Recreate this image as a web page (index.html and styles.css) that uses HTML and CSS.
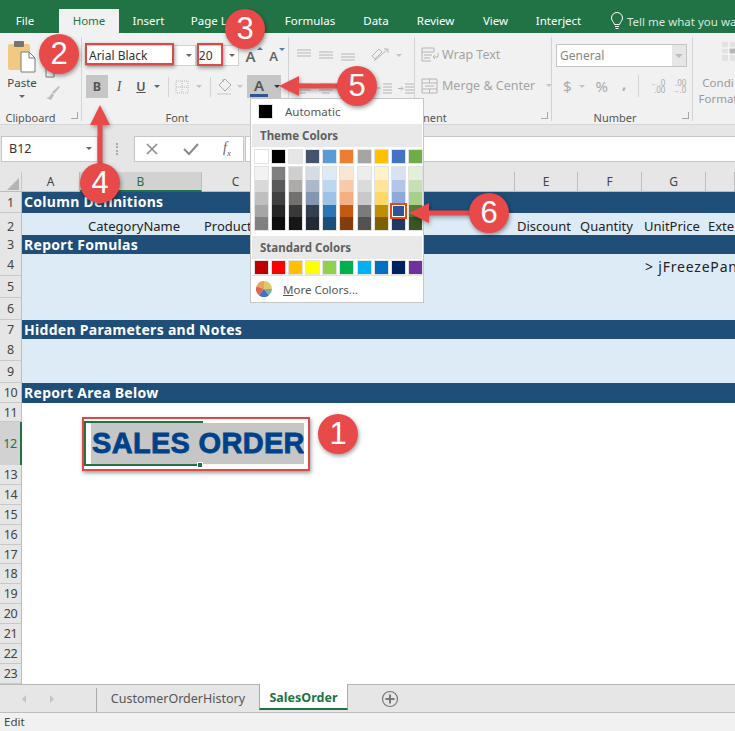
FILE: index.html
```html
<!DOCTYPE html>
<html lang="en">
<head>
    <meta charset="UTF-8">
    <title>Excel - Sales Order</title>
    <link rel="stylesheet" href="styles.css">
</head>
<body>
    <div class="tabs">
        <span class="tab tab-file">File</span>
        <span class="tab tab-home">Home</span>
        <span class="tab tab-insert">Insert</span>
        <span class="tab tab-page">Page Layout</span>
        <span class="tab tab-formulas">Formulas</span>
        <span class="tab tab-data">Data</span>
        <span class="tab tab-review">Review</span>
        <span class="tab tab-view">View</span>
        <span class="tab tab-interject">Interject</span>
        <span class="tell">
            <svg width="14" height="18" viewBox="0 0 14 18"><path d="M4.5 12.5C4 10 1.5 9 1.500 6a5.500 5.500 0 0 1 11 0c0 3-2.500 4-3 6.500zM5 14.500h4M5.500 16.500h3" fill="none" stroke="#fff" stroke-width="1"/></svg>
            Tell me what you want to do
        </span>
    </div>

    <div class="ribbon">
        <div class="group group-clipboard">
            <div class="clip-body">
                <div class="paste">
                    <svg width="30" height="33" viewBox="0 0 30 33"><rect x="1" y="4" width="22" height="26" rx="2" fill="#f2c983"/><rect x="7" y="1" width="10" height="6" rx="1" fill="#77736d"/><path d="M14 12h8l6 6v14H14z" fill="#fff" stroke="#7a7a7a"/><path d="M22 12v6h6" fill="none" stroke="#7a7a7a"/></svg>
                    <span>Paste</span>
                    <i class="caret"></i>
                </div>
                <div class="clip-tools">
                    <svg width="16" height="16" viewBox="0 0 16 16"><path d="M1 5h8v10H1zM5 1h8v10" fill="none" stroke="#777"/></svg>
                    <svg width="16" height="16" viewBox="0 0 16 16"><path d="M14 1l1 1-6 7-2-2zM7 8l2 2-3 5-5-2 3-1z" fill="#bdbdbd"/></svg>
                </div>
            </div>
            <div class="group-label">Clipboard<i class="launcher"></i></div>
        </div>

        <div class="group group-font">
            <div class="tool-row">
                <div class="combo combo-name">Arial Black<i class="caret"></i></div>
                <div class="combo combo-size">20<i class="caret"></i></div>
                <span class="grow-a">A<i class="tick tick-up"></i></span>
                <span class="shrink-a">A<i class="tick tick-down"></i></span>
            </div>
            <div class="tool-row tool-row-2">
                <span class="btn btn-on btn-b">B</span>
                <span class="btn btn-i">I</span>
                <span class="btn btn-u">U</span>
                <i class="caret"></i>
                <i class="vsep"></i>
                <svg class="border-icon" width="16" height="16" viewBox="0 0 16 16"><rect x="2" y="2" width="12" height="12" fill="none" stroke="#bbb" stroke-dasharray="1 1"/><path d="M8 2v12M2 8h12" stroke="#bbb" stroke-dasharray="1 1"/></svg>
                <i class="caret caret-light"></i>
                <i class="vsep"></i>
                <svg class="fill-icon" width="18" height="18" viewBox="0 0 18 18"><path d="M9 1l6 6-6 6-6-6zM7 4V1" fill="none" stroke="#a9a9a9"/><rect x="1" y="15" width="14" height="2" fill="#ddd"/></svg>
                <i class="caret caret-light"></i>
                <span class="color-btn"><span class="color-a">A</span><i class="caret caret-dark"></i></span>
            </div>
            <div class="group-label">Font<i class="launcher"></i></div>
        </div>

        <div class="group group-align">
            <div class="align-body">
                <div class="align-left">
                    <div class="tool-row align-row">
                        <svg width="16" height="12" viewBox="0 0 16 12"><path d="M1 1h14M1 4h14M1 7h14" stroke="#b5b5b5"/></svg>
                        <svg width="16" height="12" viewBox="0 0 16 12"><path d="M1 3h14M1 6h14M1 9h14" stroke="#b5b5b5"/></svg>
                        <svg width="16" height="12" viewBox="0 0 16 12"><path d="M1 5h14M1 8h14M1 11h14" stroke="#b5b5b5"/></svg>
                        <svg class="orient" width="20" height="18" viewBox="0 0 20 18"><path d="M2 10l7-7 3 3-7 7zM4 15l13-11M14 3h4v4" fill="none" stroke="#b5b5b5"/></svg>
                        <i class="caret caret-light"></i>
                    </div>
                    <div class="tool-row align-row align-row-2">
                        <svg width="16" height="12" viewBox="0 0 16 12"><path d="M1 1h14M1 4h9M1 7h14M1 10h9" stroke="#b5b5b5"/></svg>
                        <svg width="16" height="12" viewBox="0 0 16 12"><path d="M1 1h14M4 4h8M1 7h14M4 10h8" stroke="#b5b5b5"/></svg>
                        <svg width="16" height="12" viewBox="0 0 16 12"><path d="M1 1h14M6 4h9M1 7h14M6 10h9" stroke="#b5b5b5"/></svg>
                        <svg class="indent" width="16" height="12" viewBox="0 0 16 12"><path d="M7 1h9M7 4h9M7 7h9M7 10h9M1 5h4" stroke="#b5b5b5"/></svg>
                        <svg width="16" height="12" viewBox="0 0 16 12"><path d="M7 1h9M7 4h9M7 7h9M7 10h9M0 5.500h5M3 3.500l2 2-2 2" fill="none" stroke="#b5b5b5"/></svg>
                    </div>
                </div>
                <div class="align-right">
                    <div class="wide-tool">
                        <svg width="18" height="16" viewBox="0 0 18 16"><path d="M1 1h12v4H1zM1 5v9h9M3 8h8M3 11h6M17 6v4h-5M14 8l-2 2 2 2" fill="none" stroke="#b5b5b5"/></svg>
                        <span>Wrap Text</span>
                    </div>
                    <div class="wide-tool wide-tool-2">
                        <svg width="18" height="16" viewBox="0 0 18 16"><path d="M1 1h15v14H1zM1 5h15M1 11h15M8.500 1v4M8.500 11v4M4 8h9" fill="none" stroke="#b5b5b5"/></svg>
                        <span>Merge &amp; Center</span>
                        <i class="caret caret-light"></i>
                    </div>
                </div>
            </div>
            <div class="group-label">Alignment<i class="launcher"></i></div>
        </div>

        <div class="group group-number">
            <div class="combo combo-format">General<i class="caret caret-light"></i></div>
            <div class="tool-row number-row">
                <span class="num-sym">$</span>
                <i class="caret caret-light"></i>
                <span class="num-sym num-pct">%</span>
                <span class="num-sym num-comma">,</span>
                <i class="vsep"></i>
                <span class="dec">←.0<br>.00</span>
                <span class="dec">.00<br>→.0</span>
            </div>
            <div class="group-label">Number<i class="launcher"></i></div>
        </div>

        <div class="group group-cond">
            <svg width="18" height="26" viewBox="0 0 18 26"><path d="M0 1h18v19H0z" fill="#e2e2e2"/><path d="M7 7h11v6H7z" fill="#b5b5b5"/><path d="M0 7h18M0 13h18M7 1v19" stroke="#fff"/></svg>
            <span>Condi</span>
            <span>Format</span>
        </div>
    </div>

    <div class="formula-bar">
        <div class="name-box">B12<i class="caret"></i></div>
        <div class="dots"></div>
        <div class="fx-box">
            <svg width="14" height="14" viewBox="0 0 14 14"><path d="M2 2l10 10M12 2L2 12" stroke="#8a8a8a" stroke-width="1.600"/></svg>
            <svg width="16" height="14" viewBox="0 0 16 14"><path d="M1 7l5 5L15 2" fill="none" stroke="#8a8a8a" stroke-width="2"/></svg>
            <span class="fx">f<sub>x</sub></span>
        </div>
        <div class="formula-input"></div>
    </div>

    <div class="sheet">
        <div class="row col-heads">
            <div class="corner"></div>
            <div class="col-head">A</div>
            <div class="col-head col-active">B</div>
            <div class="col-head">C</div>
            <div class="col-head">D</div>
            <div class="col-head">E</div>
            <div class="col-head">F</div>
            <div class="col-head">G</div>
            <div class="col-head"></div>
        </div>

        <div class="row band-dark row-h21"><div class="num">1</div><div class="title">Column Definitions</div></div>
        <div class="row band-light row-h22">
            <div class="num">2</div>
            <div class="cell"></div>
            <div class="cell cell-b">CategoryName</div>
            <div class="cell">ProductName</div>
            <div class="cell"></div>
            <div class="cell">Discount</div>
            <div class="cell">Quantity</div>
            <div class="cell">UnitPrice</div>
            <div class="cell">ExtendedPrice</div>
        </div>
        <div class="row band-dark row-h19"><div class="num">3</div><div class="title">Report Fomulas</div></div>
        <div class="row band-light row-h22">
            <div class="num">4</div>
            <div class="cell"></div><div class="cell"></div><div class="cell"></div><div class="cell"></div><div class="cell"></div><div class="cell"></div>
            <div class="cell cell-freeze">&gt; jFreezePanes</div>
        </div>
        <div class="row band-light row-h22"><div class="num">5</div></div>
        <div class="row band-light row-h22"><div class="num">6</div></div>
        <div class="row band-dark row-h19"><div class="num">7</div><div class="title">Hidden Parameters and Notes</div></div>
        <div class="row band-light row-h22"><div class="num">8</div></div>
        <div class="row band-light row-h22"><div class="num">9</div></div>
        <div class="row band-dark row-h20"><div class="num">10</div><div class="title">Report Area Below</div></div>
        <div class="row row-h19"><div class="num">11</div></div>
        <div class="row row-h43">
            <div class="num num-active">12</div>
            <div class="cell"></div>
            <div class="cell-selected">
                <span class="sales">SALES ORDER</span>
                <i class="fill-handle"></i>
            </div>
        </div>
        <div class="row row-plain"><div class="num">13</div></div>
        <div class="row row-plain"><div class="num">14</div></div>
        <div class="row row-plain"><div class="num">15</div></div>
        <div class="row row-plain"><div class="num">16</div></div>
        <div class="row row-plain"><div class="num">17</div></div>
        <div class="row row-plain"><div class="num">18</div></div>
        <div class="row row-plain"><div class="num">19</div></div>
        <div class="row row-plain"><div class="num">20</div></div>
        <div class="row row-plain"><div class="num">21</div></div>
        <div class="row row-plain"><div class="num">22</div></div>
        <div class="row row-plain"><div class="num">23</div></div>
    </div>

    <div class="sheet-tabs">
        <div class="nav-arrows"><i class="arrow-left"></i><i class="arrow-right"></i></div>
        <div class="sheet-tab">CustomerOrderHistory</div>
        <div class="sheet-tab sheet-tab-on">SalesOrder</div>
        <svg class="add-sheet" width="18" height="18" viewBox="0 0 18 18"><circle cx="9" cy="9" r="7.500" fill="none" stroke="#777" stroke-width="1.200"/><path d="M9 4.500v9M4.500 9h9" stroke="#777" stroke-width="2"/></svg>
    </div>
    <div class="status-bar">Edit</div>

    <!-- font colour dropdown -->
    <div class="color-menu">
        <div class="menu-auto"><i class="auto-swatch"></i>Automatic</div>
        <div class="menu-head">Theme Colors</div>
        <div class="swatch-row" id="themeRow"></div>
        <div class="shade-grid" id="shadeGrid"></div>
        <div class="menu-head">Standard Colors</div>
        <div class="swatch-row swatch-row-std" id="standardRow"></div>
        <div class="menu-more">
            <svg width="16" height="16" viewBox="0 0 16 16"><path d="M8 8V0a8 8 0 0 0-7.500 5.200z" fill="#e8a25a"/><path d="M8 8L.5 5.200A8 8 0 0 0 3 14.200z" fill="#d9694f"/><path d="M8 8l-5 6.200a8 8 0 0 0 10 0z" fill="#4472c4"/><path d="M8 8l5 6.200A8 8 0 0 0 16 8z" fill="#7fae9a"/><path d="M8 8h8a8 8 0 0 0-8-8z" fill="#e4c66a"/></svg>
            <span><u>M</u>ore Colors...</span>
        </div>
    </div>

    <!-- callouts drawn over the screenshot -->
    <div class="mark mark-name"></div>
    <div class="mark mark-size"></div>
    <div class="mark mark-sales"></div>
    <svg class="arrows" width="735" height="731" viewBox="0 0 735 731">
        <path d="M97.500 170V125H90L100 105L110 125H102.500V170z"/>
        <path d="M345 83.500H299V76L279 86L299 96V88.500H345z"/>
        <path d="M475 210.500H429V203L409 213L429 223V215.500H475z"/>
    </svg>
    <div class="badge badge-1">1</div>
    <div class="badge badge-2">2</div>
    <div class="badge badge-3">3</div>
    <div class="badge badge-4">4</div>
    <div class="badge badge-5">5</div>
    <div class="badge badge-6">6</div>

    <script src="palette.js"></script>
</body>
</html>
```

FILE: styles.css
```css
* {
    margin: 0;
    padding: 0;
    box-sizing: border-box;
}

html {
    overflow: hidden;
}

body {
    width: 735px;
    height: 731px;
    overflow: hidden;
    position: relative;
    background: #fff;
    font-family: "Noto Sans", "Liberation Sans", sans-serif;
    font-size: 12px;
    color: #444;
}

i {
    display: inline-block;
}

.caret {
    width: 0;
    height: 0;
    border-left: 3.5px solid transparent;
    border-right: 3.5px solid transparent;
    border-top: 3.5px solid #666;
}

.caret-light {
    border-top-color: #c4c4c4;
}

.caret-dark {
    border-top-color: #333;
}

/* title tabs */
.tabs {
    height: 33px;
    background: #217346;
    color: #fff;
    display: flex;
    align-items: flex-end;
    font-size: 11.500px;
    white-space: nowrap;
    overflow: hidden;
}

.tab {
    height: 24px;
    line-height: 24px;
    text-align: center;
    flex-shrink: 0;
}

.tab-file { width: 59px; padding-right: 9px; }
.tab-home { width: 60px; background: #f1f1f1; color: #217346; }
.tab-insert { width: 59px; }
.tab-page { width: 92px; }
.tab-formulas { width: 80px; }
.tab-data { width: 52px; }
.tab-review { width: 67px; }
.tab-view { width: 53px; }
.tab-interject { width: 73px; }

.tell {
    height: 24px;
    margin-left: 15px;
    display: flex;
    align-items: center;
    gap: 3px;
    color: #d5e8dc;
    flex-shrink: 0;
}

/* ribbon */
.ribbon {
    height: 92px;
    background: #f1f1f1;
    border-bottom: 1px solid #d6d6d6;
    display: flex;
    padding-top: 4px;
    overflow: hidden;
}

.group {
    height: 84px;
    border-right: 1px solid #d4d4d4;
    position: relative;
    flex-shrink: 0;
}

.group-label {
    position: absolute;
    left: 0;
    right: 0;
    bottom: -4px;
    text-align: center;
    font-size: 11px;
    line-height: 15px;
    color: #555;
}

.group-clipboard .group-label { padding-right: 20px; }
.group-font .group-label { padding-right: 16px; }
.group-number .group-label { padding-right: 14px; }

.launcher {
    position: absolute;
    right: 3px;
    bottom: 6px;
    width: 7px;
    height: 7px;
    border-left: 1px solid #a8a8a8;
    border-bottom: 1px solid #a8a8a8;
    transform: scaleX(-1);
}

.group-clipboard { width: 82px; }
.group-font { width: 207px; padding: 8px 0 0 3px; }
.group-align { width: 263px; }
.group-number { width: 141px; padding: 7px 0 0 4px; }
.group-cond {
    width: 42px;
    border: none;
    display: flex;
    flex-direction: column;
    align-items: center;
    color: #999;
    font-size: 11.500px;
    line-height: 16px;
    padding: 4px 0 0 8px;
    white-space: nowrap;
}

.group-cond svg {
    margin-bottom: 8px;
    margin-left: 26px;
}

.clip-body {
    display: flex;
    padding: 3px 0 0 8px;
}

.paste {
    width: 28px;
    display: flex;
    flex-direction: column;
    align-items: center;
    font-size: 11.500px;
    line-height: 14px;
}

.paste span {
    margin-top: 3px;
}

.paste .caret {
    margin-top: 5px;
}

.clip-tools {
    margin: 22px 0 0 9px;
    display: flex;
    flex-direction: column;
    gap: 7px;
}

.tool-row {
    display: flex;
    align-items: center;
}

.tool-row-2 {
    margin-top: 9px;
    height: 23px;
    padding-left: 1px;
}

.combo {
    background: #fff;
    height: 21px;
    line-height: 20px;
    border: 1px solid #d0d0d0;
    position: relative;
    font-size: 12px;
    padding-left: 3px;
    color: #333;
    white-space: nowrap;
}

.combo .caret {
    position: absolute;
    right: 3px;
    top: 8px;
}

.combo-name { width: 112px; }
.combo-size { width: 44px; margin-right: 5px; padding-left: 2px; }

.grow-a, .shrink-a {
    position: relative;
    font-weight: 600;
    color: #666;
    width: 22px;
    padding-left: 1px;
}

.grow-a { font-size: 15px; }
.shrink-a { font-size: 13px; padding-left: 3px; }

.tick {
    position: absolute;
    top: 1px;
    right: 3px;
    width: 0;
    height: 0;
    border-left: 3px solid transparent;
    border-right: 3px solid transparent;
}

.tick-up { border-bottom: 3px solid #4a7ebb; }
.tick-down { border-top: 3px solid #4a7ebb; }

.btn {
    width: 22px;
    height: 23px;
    line-height: 23px;
    text-align: center;
    font-size: 12.500px;
    color: #555;
    margin-right: 0;
}

.btn-on { background: #c6c6c6; }
.btn-b { font-weight: 700; }
.btn-i { font-style: italic; font-family: "Liberation Serif", serif; font-size: 14px; }
.btn-u { text-decoration: underline; font-weight: 600; margin-right: 2px; }

.vsep {
    width: 1px;
    height: 20px;
    background: #d4d4d4;
    margin: 0 5px 0 8px;
}

.border-icon { margin-right: 6px; }
.fill-icon { margin-right: 3px; }

.color-btn {
    width: 34px;
    height: 23px;
    background: #c6c6c6;
    margin-left: 4px;
    display: flex;
    align-items: center;
    gap: 6px;
    padding-left: 3px;
}

.color-a {
    display: block;
    width: 18px;
    height: 20px;
    line-height: 16px;
    text-align: center;
    font-weight: 600;
    font-size: 15px;
    color: #555;
    border-bottom: 3px solid #2f5496;
}

.align-body {
    display: flex;
}

.align-left {
    width: 127px;
    border-right: 1px solid #d4d4d4;
    height: 84px;
    padding: 9px 0 0 7px;
}

.align-row {
    gap: 6px;
}

.align-row-2 {
    margin-top: 19px;
}

.orient { margin-left: 8px; }
.indent { margin-left: 14px; }

.align-right {
    padding: 8px 0 0 6px;
    color: #a4a4a4;
    font-size: 12.500px;
    white-space: nowrap;
}

.wide-tool {
    display: flex;
    align-items: center;
    gap: 3px;
    height: 19px;
}

.wide-tool-2 {
    margin-top: 12px;
}

.wide-tool-2 .caret {
    margin-left: 8px;
}

.combo-format {
    width: 131px;
    height: 23px;
    line-height: 21px;
    border: 1px solid #c4c4c4;
    color: #888;
    padding-left: 3px;
}

.combo-format .caret {
    right: 0;
    top: 0;
    width: 14px;
    height: 21px;
    border: none;
    background: #e6e6e6;
}

.combo-format .caret::after {
    content: "";
    position: absolute;
    left: 3px;
    top: 9px;
    border-left: 4px solid transparent;
    border-right: 4px solid transparent;
    border-top: 4px solid #bdbdbd;
}

.number-row {
    margin-top: 6px;
    height: 26px;
    padding-left: 7px;
    color: #aaa;
}

.num-sym {
    font-size: 15px;
    margin-right: 7px;
}

.num-pct { margin: 0 14px 0 11px; }
.num-comma { font-weight: 700; margin-right: 4px; margin-bottom: 6px; }

.number-row .vsep {
    height: 22px;
    margin: 0 6px 0 8px;
}

.dec {
    font-size: 8px;
    line-height: 7px;
    width: 20px;
    text-align: right;
    margin-right: 1px;
    white-space: nowrap;
}

/* formula bar */
.formula-bar {
    height: 47px;
    background: #e6e6e6;
    display: flex;
    padding: 11px 0 10px 1px;
}

.name-box, .fx-box, .formula-input {
    background: #fff;
    border: 1px solid #c6c6c6;
    height: 26px;
}

.name-box {
    width: 97px;
    line-height: 24px;
    padding-left: 7px;
    font-size: 12.500px;
    color: #333;
    position: relative;
}

.name-box .caret {
    position: absolute;
    right: 5px;
    top: 10px;
}

.dots {
    width: 2px;
    height: 12px;
    margin: 7px 16px 0 18px;
    border-left: 2px dotted #aaa;
}

.fx-box {
    width: 110px;
    display: flex;
    align-items: center;
    justify-content: space-between;
    padding: 0 12px 0 10px;
    margin-right: 1px;
}

.fx {
    font-family: "Liberation Serif", serif;
    font-style: italic;
    font-size: 14px;
    color: #666;
}

.fx sub {
    font-size: 9px;
}

.formula-input {
    flex: 1;
    border-right: none;
}

/* worksheet */
.sheet {
    height: 512px;
    overflow: hidden;
    background: #fff;
}

.row {
    display: grid;
    grid-template-columns: 22px 58px 122px 68px 245px 63px 64px 64px 29px;
    white-space: nowrap;
}

.col-heads {
    height: 20px;
    background: #e6e6e6;
    font-size: 12px;
    border-bottom: 1px solid #bbb;
}

.corner {
    position: relative;
    border-right: 1px solid #c6c6c6;
}

.corner::after {
    content: "";
    position: absolute;
    right: 2px;
    bottom: 2px;
    border-left: 12px solid transparent;
    border-bottom: 12px solid #b4b4b4;
}

.col-head {
    text-align: center;
    line-height: 19px;
    color: #444;
    border-right: 1px solid #bdbdbd;
}

.col-active {
    background: #d2d2d2;
    color: #217346;
    border-bottom: 2px solid #217346;
    height: 20px;
}

.row-h19 { height: 19px; }
.row-h20 { height: 20px; }
.row-h21 { height: 21px; }
.row-h22 { height: 22px; }
.row-h43 { height: 43px; }
.row-plain { height: 19.900px; }

.num {
    background: #e6e6e6;
    border-right: 1px solid #bdbdbd;
    border-bottom: 1px solid #c8c8c8;
    text-align: center;
    font-size: 12.500px;
    color: #444;
    display: flex;
    align-items: center;
    justify-content: center;
    letter-spacing: -0.300px;
}

.num-active {
    background: #d2d2d2;
    color: #217346;
    border-right: 2px solid #217346;
}

.band-dark {
    background: #1f4e79;
}

.band-light {
    background: #ddebf7;
}

.title {
    grid-column: 2 / -1;
    color: #fff;
    font-weight: 700;
    font-size: 14px;
    letter-spacing: 0.300px;
    padding-left: 2px;
    line-height: 20px;
}

.cell {
    font-size: 13px;
    color: #222;
    line-height: 27px;
    padding-left: 2px;
    overflow: hidden;
}

.cell-b {
    padding-left: 8px;
}

.cell:nth-child(4) {
    overflow: visible;
}

.cell-freeze {
    grid-column: 8 / 10;
    line-height: 26px;
    padding-left: 3px;
    font-size: 14px;
    letter-spacing: 0.800px;
}

.cell-selected {
    position: relative;
    margin: -1px 0 0 4px;
    width: 119px;
    height: 45px;
    border: solid #217346;
    border-width: 2px 0 2px 2px;
    padding-left: 5px;
}

.sales {
    display: block;
    width: 213px;
    height: 41px;
    background: #c6c6c6;
    color: #004289;
    font-family: "Liberation Sans", Arial, sans-serif;
    font-weight: 700;
    font-size: 29px;
    letter-spacing: 0.300px;
    line-height: 41px;
    -webkit-text-stroke: 0.800px #004289;
    padding-left: 1px;
    overflow: hidden;
}

.fill-handle {
    position: absolute;
    right: 0;
    bottom: -4px;
    width: 6px;
    height: 6px;
    background: #217346;
    border: 1px solid #fff;
}

/* sheet tabs and status */
.sheet-tabs {
    height: 28px;
    background: #e6e6e6;
    border-top: 1px solid #b8b8b8;
    display: flex;
    color: #555;
    font-size: 12.500px;
}

.nav-arrows {
    width: 96px;
    display: flex;
    align-items: center;
    gap: 24px;
    padding-left: 22px;
    border-right: none;
}

.arrow-left, .arrow-right {
    width: 0;
    height: 0;
    border-top: 4px solid transparent;
    border-bottom: 4px solid transparent;
}

.arrow-left { border-right: 4px solid #c4c4c4; }
.arrow-right { border-left: 4px solid #c4c4c4; }

.sheet-tab {
    width: 163px;
    height: 24px;
    margin-top: 3px;
    text-align: center;
    line-height: 21px;
    border-left: 1px solid #aaa;
}

.sheet-tab-on {
    width: 89px;
    height: 26px;
    margin-top: -1px;
    background: #fff;
    color: #217346;
    font-weight: 700;
    line-height: 27px;
    border-left: 1px solid #aaa;
    border-right: 1px solid #aaa;
    border-bottom: 2px solid #217346;
}

.add-sheet {
    margin: 5px 0 0 33px;
}

.status-bar {
    height: 19px;
    background: #f1f1f1;
    border-top: 1px solid #bdbdbd;
    padding-left: 4px;
    line-height: 18px;
    font-size: 11.500px;
    color: #444;
}

/* colour menu */
.color-menu {
    position: absolute;
    left: 250px;
    top: 98px;
    width: 174px;
    height: 205px;
    background: #fff;
    border: 1px solid #c6c6c6;
    padding: 0 1px;
}

.menu-auto {
    height: 25px;
    display: flex;
    align-items: center;
    padding-left: 6px;
    gap: 12px;
    font-size: 11.500px;
    color: #555;
}

.auto-swatch {
    width: 15px;
    height: 15px;
    background: #000;
    border: 1px solid #e2e2e2;
}

.menu-head {
    height: 23px;
    background: #e9e9e9;
    font-weight: 700;
    font-size: 11.500px;
    line-height: 23px;
    padding-left: 8px;
    color: #5f5f5f;
}

.swatch-row {
    display: grid;
    grid-template-columns: repeat(10, 13px);
    column-gap: 4.100px;
    padding: 3px 0 0 3px;
    height: 18px;
}

.swatch-row-std {
    padding-top: 2px;
    height: 16px;
}

.swatch {
    height: 13px;
    width: 13px;
    outline: 1px solid #e2e2e2;
}

.shade-grid {
    display: grid;
    grid-template-columns: repeat(10, 13px);
    column-gap: 4.100px;
    padding: 2px 0 0 3px;
    height: 71px;
}

.shade-col {
    outline: 1px solid #e2e2e2;
    height: 63px;
}

.shade {
    height: 12.600px;
    position: relative;
}

.shade-picked {
    outline: 2px solid #e8490f;
    outline-offset: 0;
    border: 1px solid #fff;
    z-index: 1;
}

.menu-more {
    height: 27px;
    display: flex;
    align-items: center;
    gap: 11px;
    padding-left: 4px;
    border-top: 1px solid #e2e2e2;
    font-size: 11.500px;
    color: #555;
}

/* callouts */
.mark {
    position: absolute;
    border: 2px solid #e04848;
    box-shadow: 1px 2px 4px rgba(0, 0, 0, 0.4);
}

.mark-name { left: 85px; top: 43px; width: 89px; height: 22px; }
.mark-size { left: 197px; top: 43px; width: 26px; height: 23px; }
.mark-sales { left: 82px; top: 417px; width: 228px; height: 54px; }

.arrows {
    position: absolute;
    left: 0;
    top: 0;
    fill: #e84a4a;
    filter: drop-shadow(1px 2px 2px rgba(0, 0, 0, 0.35));
}

.badge {
    position: absolute;
    width: 40px;
    height: 40px;
    border-radius: 50%;
    background: #e84a4a;
    color: #fff;
    font-family: "Liberation Sans", sans-serif;
    font-size: 31px;
    line-height: 40px;
    text-align: center;
    box-shadow: 1px 2px 4px rgba(0, 0, 0, 0.4);
}

.badge-1 { left: 318px; top: 414px; }
.badge-2 { left: 39px; top: 34px; }
.badge-3 { left: 225px; top: 9px; }
.badge-4 { left: 80px; top: 163px; }
.badge-5 { left: 337px; top: 66px; }
.badge-6 { left: 469px; top: 193px; }
```

FILE: palette.js
```js
const THEME = ['#ffffff', '#000000', '#e7e6e6', '#44546a', '#5b9bd5', '#ed7d31', '#a5a5a5', '#ffc000', '#4472c4', '#70ad47'];

const SHADES = [
    ['#f2f2f2', '#d9d9d9', '#bfbfbf', '#a6a6a6', '#808080'],
    ['#7f7f7f', '#595959', '#404040', '#262626', '#0d0d0d'],
    ['#d0cece', '#aeabab', '#757070', '#3a3838', '#171616'],
    ['#d6dce4', '#acb9ca', '#8497b0', '#333f4f', '#222b35'],
    ['#deeaf6', '#bdd7ee', '#9dc3e6', '#2e75b5', '#1f4e79'],
    ['#fbe5d5', '#f7caac', '#f4b083', '#c45911', '#833c0b'],
    ['#ededed', '#dbdbdb', '#c9c9c9', '#7b7b7b', '#525252'],
    ['#fff2cc', '#fee599', '#ffd965', '#bf8f00', '#7f6000'],
    ['#d9e2f3', '#b4c6e7', '#8eaadb', '#2f5496', '#1f3864'],
    ['#e2efd9', '#c5e0b3', '#a8d08d', '#538135', '#375623']
];

const STANDARD = ['#c00000', '#ff0000', '#ffc000', '#ffff00', '#92d050', '#00b050', '#00b0f0', '#0070c0', '#002060', '#7030a0'];

function addSwatches(rowId, colors) {
    const row = document.getElementById(rowId);
    colors.forEach(function(color) {
        const el = document.createElement('div');
        el.className = 'swatch';
        el.style.background = color;
        row.appendChild(el);
    });
}

addSwatches('themeRow', THEME);
addSwatches('standardRow', STANDARD);

const grid = document.getElementById('shadeGrid');
SHADES.forEach(function(col, i) {
    const colEl = document.createElement('div');
    colEl.className = 'shade-col';
    col.forEach(function(color, j) {
        const el = document.createElement('div');
        el.className = (i === 8 && j === 3) ? 'shade shade-picked' : 'shade';
        el.style.background = color;
        colEl.appendChild(el);
    });
    grid.appendChild(colEl);
});
```
